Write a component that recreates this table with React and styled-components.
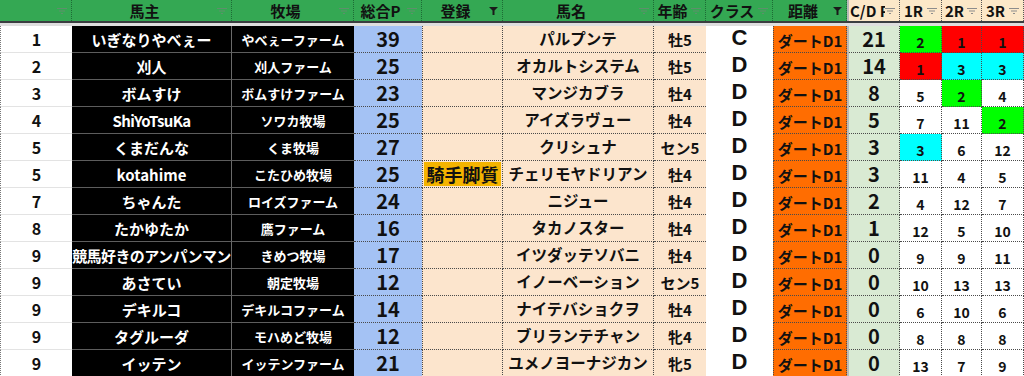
import React from 'react';
import styled, { createGlobalStyle } from 'styled-components';

const GlobalStyle = createGlobalStyle`
  html, body { margin: 0; padding: 0; background: #ffffff; }
  body { font-family: "Noto Sans CJK JP", "Noto Sans", sans-serif; overflow: hidden; }
`;

const COLS = '72px 160px 122px 68px 81px 151px 52px 67px 74px 2px 51px 42px 40px 42px';

const Sheet = styled.div`
  width: 1024px;
  height: 376px;
  overflow: hidden;
  display: flex;
  flex-direction: column;
`;

const HeaderRow = styled.div`
  display: grid;
  grid-template-columns: ${COLS};
  height: 21px;
  flex: none;
`;

const HeadCell = styled.div`
  display: flex;
  align-items: center;
  background: ${p => p.$bg || '#34a853'};
  border-right: 1px dotted ${p => p.$line || '#1d6b35'};
  box-sizing: border-box;
  overflow: hidden;
  min-width: 0;
`;

const HeadLabel = styled.span`
  flex: 1;
  min-width: 0;
  text-align: ${p => p.$align || 'center'};
  padding-left: ${p => p.$pad || 0}px;
  font-size: ${p => p.$size || 15}px;
  font-weight: 700;
  color: #111;
  white-space: nowrap;
  overflow: hidden;
  line-height: 21px;
  height: 21px;
`;

const FreezeLine = styled.div`
  background: #b9b9b9;
`;

const Divider = styled.div`
  flex: none;
  height: 3px;
  border-top: 2px solid #3a3d40;
  background: #dedede;
`;

const Row = styled.div`
  display: grid;
  grid-template-columns: ${COLS};
  height: 27px;
  flex: none;
`;

const Cell = styled.div`
  display: flex;
  align-items: center;
  justify-content: center;
  box-sizing: border-box;
  min-width: 0;
  overflow: visible;
  white-space: nowrap;
  font-weight: 700;
  line-height: 1;
  color: #111;
  border-bottom: 1px dotted #4a4a4a;
  font-size: 15px;
`;

const RankCell = styled(Cell)`
  background: #fff;
  border-bottom: 1px solid #e3e3e3;
  border-left: 1px dotted #777;
  font-size: 16px;
`;

const OwnerCell = styled(Cell)`
  background: #000;
  color: #fff;
  border-bottom: 1px solid #5d5d5d;
  border-right: 1px solid #6a6a6a;
  font-size: 15px;
  letter-spacing: ${p => p.$tight ? '-0.6px' : '0'};
  overflow: hidden;
`;

const FarmCell = styled(OwnerCell)`
  font-size: 13px;
  border-right: none;
`;

const PointCell = styled(Cell)`
  background: #a4c2f4;
  font-size: 20px;
`;

const EntryCell = styled(Cell)`
  background: #fce5cd;
  border-left: 1px dotted #4a4a4a;
  border-right: 1px dotted #4a4a4a;
  padding: 1px;
`;

const Badge = styled.span`
  display: flex;
  align-items: center;
  justify-content: center;
  width: 100%;
  height: 100%;
  background: #f4b400;
  font-size: 18px;
  font-weight: 700;
`;

const NameCell = styled(Cell)`
  background: #fce5cd;
  border-right: 1px dotted #4a4a4a;
  font-size: 15.5px;
`;

const AgeCell = styled(Cell)`
  background: #fce5cd;
  font-size: 15px;
`;

const ClassCell = styled(Cell)`
  background: #fff;
  border-bottom: 1px solid #fff;
  font-family: "Liberation Sans", Arial, sans-serif;
  font-size: 22px;
  padding-bottom: 3px;
`;

const DistCell = styled(Cell)`
  background: #ff6d01;
  border-left: 1px dotted #4a4a4a;
  border-right: 1px dotted #4a4a4a;
  font-size: 15px;
  padding-top: 2px;
`;

const CdCell = styled(Cell)`
  background: #d9ead3;
  border-right: 1px dotted #4a4a4a;
  font-size: 20px;
`;

const RaceCell = styled(Cell)`
  background: ${p => p.$bg || '#fff'};
  border-right: 1px dotted #4a4a4a;
  font-size: 14px;
  padding-top: 5px;
`;

const RACE_BG = { g: '#00ff00', r: '#ff0000', c: '#00ffff' };

const IconSvg = styled.svg`
  flex: none;
  margin-right: 4px;
`;

function FilterIcon({ active, color }) {
  if (active) {
    return (
      <IconSvg width="9" height="8" viewBox="0 0 9 8">
        <path d="M0 0 H9 L5.5 3.5 V8 H3.5 V3.5 Z" fill="#1a1a1a" />
      </IconSvg>
    );
  }
  return (
    <IconSvg width="10" height="6" viewBox="0 0 10 6">
      <rect x="0" y="0" width="10" height="1" fill={color} />
      <rect x="2" y="2.5" width="6" height="1" fill={color} />
      <rect x="4" y="5" width="2" height="1" fill={color} />
    </IconSvg>
  );
}

const headers = [
  { label: '' },
  { label: '馬主' },
  { label: '牧場' },
  { label: '総合P' },
  { label: '登録', active: true },
  { label: '馬名' },
  { label: '年齢' },
  { label: 'クラス' },
  { label: '距離', active: true },
  null,
  { label: 'C/D P', peach: true, align: 'left', pad: 1 },
  { label: '1R', peach: true },
  { label: '2R', peach: true },
  { label: '3R', peach: true },
];

const rows = [
  ['1', 'いぎなりやべぇー', 'やべぇーファーム', 39, '', 'パルプンテ', '牡5', 'C', 21, [[2, 'g'], [1, 'r'], [1, 'r']]],
  ['2', '刈人', '刈人ファーム', 25, '', 'オカルトシステム', '牡5', 'D', 14, [[1, 'r'], [3, 'c'], [3, 'c']]],
  ['3', 'ボムすけ', 'ボムすけファーム', 23, '', 'マンジカブラ', '牡4', 'D', 8, [[5], [2, 'g'], [4]]],
  ['4', 'ShiYoTsuKa', 'ソワカ牧場', 25, '', 'アイズラヴュー', '牡4', 'D', 5, [[7], [11], [2, 'g']]],
  ['5', 'くまだんな', 'くま牧場', 27, '', 'クリシュナ', 'セン5', 'D', 3, [[3, 'c'], [6], [12]]],
  ['5', 'kotahime', 'こたひめ牧場', 25, '騎手脚質', 'チェリモヤドリアン', '牡4', 'D', 3, [[11], [4], [5]]],
  ['7', 'ちゃんた', 'ロイズファーム', 24, '', 'ニジュー', '牡4', 'D', 2, [[4], [12], [7]]],
  ['8', 'たかゆたか', '鷹ファーム', 16, '', 'タカノスター', '牡4', 'D', 1, [[12], [5], [10]]],
  ['9', '競馬好きのアンパンマン', 'きめつ牧場', 17, '', 'イツダッテソバニ', '牡4', 'D', 0, [[9], [9], [11]]],
  ['9', 'あさてい', '朝定牧場', 12, '', 'イノーベーション', 'セン5', 'D', 0, [[10], [13], [13]]],
  ['9', 'デキルコ', 'デキルコファーム', 14, '', 'ナイテバショクヲ', '牡4', 'D', 0, [[6], [10], [6]]],
  ['9', 'タグルーダ', 'モハめど牧場', 12, '', 'ブリランテチャン', '牝4', 'D', 0, [[8], [8], [8]]],
  ['9', 'イッテン', 'イッテンファーム', 21, '', 'ユメノヨーナジカン', '牝5', 'D', 0, [[13], [7], [9]]],
];

export default function App() {
  return (
    <>
      <GlobalStyle />
      <Sheet>
        <HeaderRow>
          {headers.map((h, i) =>
            h === null ? (
              <FreezeLine key={i} />
            ) : (
              <HeadCell key={i} $bg={h.peach ? '#fce8c8' : undefined} $line={h.peach ? '#555' : undefined}>
                <HeadLabel $align={h.align} $pad={h.pad}>{h.label}</HeadLabel>
                <FilterIcon active={h.active} color={h.peach ? '#8c8c8c' : '#5e8f6c'} />
              </HeadCell>
            )
          )}
        </HeaderRow>
        <Divider />
        {rows.map((r, i) => (
          <Row key={i}>
            <RankCell>{r[0]}</RankCell>
            <OwnerCell $tight={r[1].length > 9}>{r[1]}</OwnerCell>
            <FarmCell>{r[2]}</FarmCell>
            <PointCell>{r[3]}</PointCell>
            <EntryCell>{r[4] ? <Badge>{r[4]}</Badge> : null}</EntryCell>
            <NameCell>{r[5]}</NameCell>
            <AgeCell>{r[6]}</AgeCell>
            <ClassCell>{r[7]}</ClassCell>
            <DistCell>ダートD1</DistCell>
            <FreezeLine />
            <CdCell>{r[8]}</CdCell>
            {r[9].map(([n, c], j) => (
              <RaceCell key={j} $bg={c ? RACE_BG[c] : undefined}>{n}</RaceCell>
            ))}
          </Row>
        ))}
      </Sheet>
    </>
  );
}
